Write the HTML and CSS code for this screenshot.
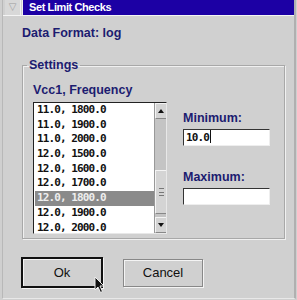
FILE: index.html
```html
<!DOCTYPE html>
<html lang="en">
  <head>
    <meta charset="UTF-8" />
    <title>Set Limit Checks</title>
    <link rel="stylesheet" href="styles.css">
  </head>

  <body>
    <div class="window">
      <div class="titlebar">
        <div class="sysmenu">&#9661;</div>
        <div class="title">Set Limit Checks</div>
      </div>

      <div class="content">
        <div class="format">Data Format: log</div>

        <fieldset class="settings">
          <legend>Settings</legend>

          <div class="list-col">
            <div class="label">Vcc1, Frequency</div>
            <div class="listbox">
              <ul class="items">
                <li>11.0, 1800.0</li>
                <li>11.0, 1900.0</li>
                <li>11.0, 2000.0</li>
                <li>12.0, 1500.0</li>
                <li>12.0, 1600.0</li>
                <li>12.0, 1700.0</li>
                <li class="selected">12.0, 1800.0</li>
                <li>12.0, 1900.0</li>
                <li>12.0, 2000.0</li>
              </ul>
              <div class="scrollbar">
                <div class="arrow up"></div>
                <div class="track">
                  <div class="thumb"><span></span></div>
                </div>
                <div class="arrow down"></div>
              </div>
            </div>
          </div>

          <div class="limits">
            <div class="label">Minimum:</div>
            <div class="field">10.0<span class="caret"></span></div>
            <div class="label max">Maximum:</div>
            <div class="field"></div>
          </div>
        </fieldset>

        <div class="buttons">
          <button class="btn default">Ok</button>
          <button class="btn">Cancel</button>
        </div>
      </div>

      <!-- mouse pointer resting on the Ok button -->
      <svg class="cursor" width="12" height="18" viewBox="0 0 12 18">
        <path d="M1 1 L1 14 L4 11 L6.5 16.5 L8.5 15.5 L6 10 L10 10 Z" fill="#111" stroke="#eee" stroke-width="1"/>
      </svg>
    </div>
  </body>
</html>
```

FILE: styles.css
```css
body {
  margin: 0;
  background-color: #cfcfcf;
  font-family: 'Liberation Sans', Arial, sans-serif;
  overflow: hidden;
}

.window {
  position: relative;
  width: 291px;
  height: 298px;
  margin-left: 2px;
  border-left: 1px solid #b8b8b8;
  border-right: 2px solid #b0b0b0;
  border-bottom: 1px solid #e8e8e8;
  background-color: #d0d0d0;
}

.titlebar {
  display: flex;
  height: 15px;
  border-bottom: 1px solid #f4f4f4;
}

.sysmenu {
  width: 15px;
  margin-left: 2px;
  margin-right: 1px;
  background-color: #d8d8d8;
  border-right: 1px solid #f0f0f0;
  color: #a0a0a0;
  font-family: 'DejaVu Sans', sans-serif;
  font-size: 10px;
  line-height: 14px;
  text-align: center;
}

.title {
  flex: 1;
  background-color: #1c00a4;
  color: #fff;
  font-weight: bold;
  font-size: 11px;
  letter-spacing: -0.4px;
  line-height: 15px;
  padding-left: 6px;
  border-left: 1px solid #f0f0f0;
}

.content {
  padding: 9px 0 0 19px;
}

.format,
.label,
.settings legend {
  color: #1c1c70;
  font-size: 12.5px;
  font-weight: bold;
}

.format {
  line-height: 16px;
}

.label {
  line-height: 15px;
}

.settings {
  display: flex;
  width: 251px;
  height: 168px;
  margin: 17px 0 0 0;
  padding: 11px 0 0 10px;
  border: 1px solid #a8a8a8;
  box-shadow: 1px 1px 0 #f0f0f0, inset 1px 1px 0 #f0f0f0;
  box-sizing: content-box;
}

.settings legend {
  padding: 0 2px;
  margin-left: -6px;
}

.list-col {
  width: 134px;
}

.listbox {
  display: flex;
  height: 130px;
  margin-top: 4px;
  background-color: #fff;
  border-top: 1px solid #222;
  border-left: 1px solid #222;
  border-right: 1px solid #e8e8e8;
  border-bottom: 1px solid #e8e8e8;
}

.items {
  flex: 1;
  margin: 0;
  padding: 0 0 0 1px;
  list-style: none;
  font-family: 'DejaVu Sans Mono', monospace;
  font-size: 11px;
  font-weight: bold;
  letter-spacing: -0.9px;
  color: #111;
}

.items li {
  height: 14.7px;
  line-height: 14.7px;
  padding-left: 2px;
}

.items li.selected {
  background-color: #8a8a8a;
  color: #eee;
}

.scrollbar {
  display: flex;
  flex-direction: column;
  width: 11px;
  background-color: #c8c8c8;
  border-left: 1px solid #999;
}

.arrow {
  height: 14px;
  background-color: #d4d4d4;
  border-top: 1px solid #f4f4f4;
  border-left: 1px solid #f4f4f4;
  border-bottom: 1px solid #888;
  position: relative;
}

.arrow::after {
  content: "";
  position: absolute;
  left: 2px;
  top: 5px;
  border-left: 3px solid transparent;
  border-right: 3px solid transparent;
}

.arrow.up::after {
  border-bottom: 4px solid #111;
}

.arrow.down::after {
  border-top: 4px solid #111;
}

.track {
  flex: 1;
  padding-top: 51px;
  background-color: #c4c4c4;
}

.thumb {
  height: 42px;
  background-color: #d4d4d4;
  border-top: 1px solid #f4f4f4;
  border-left: 1px solid #f4f4f4;
  border-bottom: 1px solid #888;
  display: flex;
  align-items: center;
  justify-content: center;
}

.thumb span {
  width: 5px;
  height: 6px;
  border-top: 1px solid #777;
  border-bottom: 1px solid #777;
  background: linear-gradient(#777, #777) center / 5px 1px no-repeat;
}

.limits {
  margin-left: 16px;
  padding-top: 28px;
}

.field {
  width: 83px;
  height: 15px;
  margin-top: 3px;
  background-color: #fff;
  border-top: 1px solid #333;
  border-left: 1px solid #333;
  border-right: 1px solid #eee;
  border-bottom: 1px solid #eee;
  font-family: 'DejaVu Sans Mono', monospace;
  font-size: 11px;
  font-weight: bold;
  letter-spacing: -0.9px;
  line-height: 15px;
  padding-left: 2px;
  color: #111;
}

.caret {
  display: inline-block;
  width: 1px;
  height: 13px;
  background-color: #111;
  vertical-align: -2px;
  margin-left: 1px;
}

.label.max {
  margin-top: 24px;
}

.buttons {
  display: flex;
  align-items: center;
  gap: 20px;
  margin-top: 18px;
  margin-left: -1px;
}

.btn {
  width: 80px;
  height: 28px;
  background-color: #d0d0d0;
  border: 1px solid #888;
  box-shadow: inset 1px 1px 0 #f4f4f4, 1px 1px 0 #f4f4f4;
  font-family: 'Liberation Sans', Arial, sans-serif;
  font-size: 13px;
  color: #111;
  padding: 0;
}

.btn.default {
  width: 82px;
  height: 31px;
  border: 2px solid #111;
}

.cursor {
  position: absolute;
  left: 91px;
  top: 276px;
}
```
